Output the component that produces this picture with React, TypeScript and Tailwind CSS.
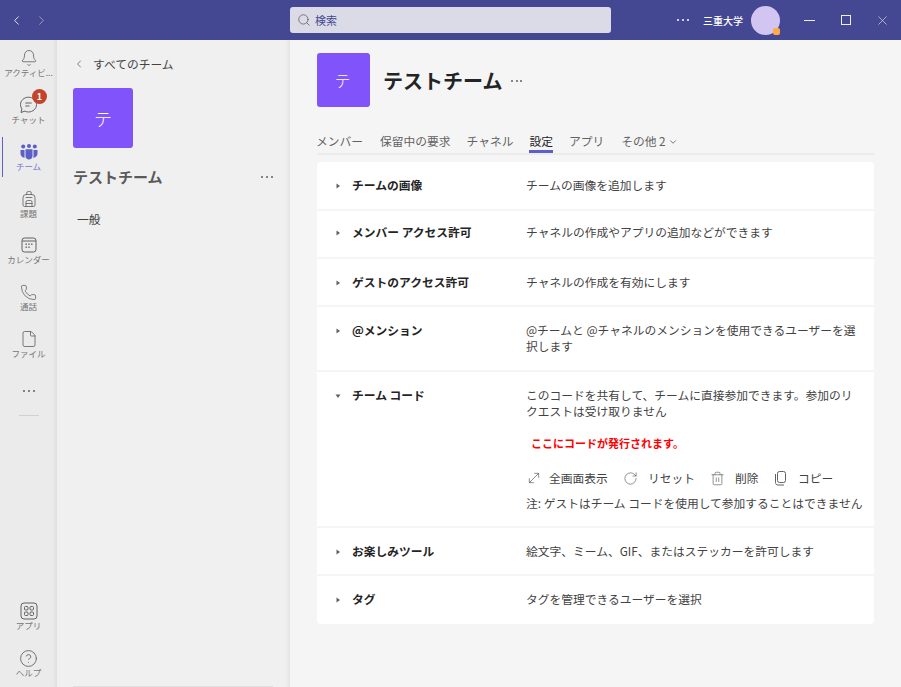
import { Backpack, Bell, ChevronDown, ChevronLeft, ChevronRight, CircleHelp, File, MoveDiagonal, Phone, RotateCw, Search, Trash2, X } from "lucide-react";
import type { ReactNode } from "react";

const font = "font-['Noto_Sans_CJK_JP','Noto_Sans',sans-serif]";

const Dots = ({ className }: { className: string }) => (
  <div className={`flex ${className}`}>
    <span className="h-[2px] w-[2px] rounded-full bg-current" />
    <span className="h-[2px] w-[2px] rounded-full bg-current" />
    <span className="h-[2px] w-[2px] rounded-full bg-current" />
  </div>
);

const ChatIcon = () => (
  <svg width="19" height="18" viewBox="0 0 19 18" fill="none" stroke="#616161" strokeWidth="1">
    <path d="M9.5 1.2c-4.4 0-8 3.3-8 7.4 0 1.6.5 3 1.4 4.2l-.9 3.7 3.9-1.4c1.1.6 2.3.9 3.6.9 4.4 0 8-3.3 8-7.4s-3.6-7.4-8-7.4z" />
    <path d="M6.3 7h6.4M6.3 10h4.2" />
  </svg>
);

const TeamsIcon = () => (
  <svg width="18" height="16" viewBox="0 0 18 16" fill="#5b5fc7">
    <circle cx="3.2" cy="2.6" r="2" />
    <circle cx="9" cy="2" r="2" />
    <circle cx="14.8" cy="2.6" r="2" />
    <path d="M0.5 6h4v6.2c0 .8.1 1.2.3 1.6C2.5 13.6.5 12 .5 9.5zM17.5 6h-4v6.2c0 .8-.1 1.2-.3 1.6 2.3-.2 4.3-1.8 4.3-4.3z" />
    <path d="M5.5 5.2h7V12c0 2-1.6 3.6-3.5 3.6S5.5 14 5.5 12z" />
  </svg>
);

const CalendarIcon = () => (
  <svg width="16" height="16" viewBox="0 0 16 16" fill="none" stroke="#616161">
    <rect x="1" y="1" width="14" height="14" rx="2.5" />
    <path d="M1 4h14" />
    <g fill="#616161" stroke="none">
      <rect x="4.5" y="6.5" width="1.4" height="1.4" />
      <rect x="7.3" y="6.5" width="1.4" height="1.4" />
      <rect x="10.1" y="6.5" width="1.4" height="1.4" />
      <rect x="4.5" y="9.5" width="1.4" height="1.4" />
      <rect x="7.3" y="9.5" width="1.4" height="1.4" />
    </g>
  </svg>
);

const AppsIcon = () => (
  <svg width="18" height="18" viewBox="0 0 18 18" fill="none" stroke="#616161">
    <rect x="1" y="1" width="16" height="16" rx="3" />
    <rect x="4.5" y="4.5" width="3.5" height="3.5" rx="1" />
    <rect x="10" y="4.5" width="3.5" height="3.5" rx="1" />
    <rect x="4.5" y="10" width="3.5" height="3.5" rx="1" />
    <rect x="10" y="10" width="3.5" height="3.5" rx="1" />
  </svg>
);

const CopyIcon = () => (
  <svg width="14" height="15" viewBox="0 0 14 15" fill="none" stroke="#616161" className="mr-[10px]">
    <rect x="3.5" y="0.5" width="8" height="11" rx="2" />
    <path d="M1.5 3v8.5c0 1.5 1 2.5 2.5 2.5h6" />
  </svg>
);

const RailItem = ({ icon, label, active, className }: { icon: ReactNode; label: string; active?: boolean; className?: string }) => (
  <div className={`relative flex w-full flex-col items-center justify-start pt-[9px] ${className ?? "h-[47px]"}`}>
    {active && <div className="absolute left-[2px] top-[3px] h-[40px] w-[1px] bg-[#5b5fc7]" />}
    <div className="flex h-[18px] items-center justify-center">{icon}</div>
    <div className={`w-full truncate text-center text-[8.5px] leading-[11px] ${active ? "text-[#7678d2]" : "text-[#757575]"}`}>{label}</div>
  </div>
);

const Tri = ({ open }: { open?: boolean }) => (
  <svg width="6" height="6" viewBox="0 0 6 6" fill="#616161" className={open ? "rotate-90" : ""}>
    <path d="M1.5 0.5 5 3 1.5 5.5z" />
  </svg>
);

const Row = ({ title, desc, h, open, children }: { title: string; desc: string; h: string; open?: boolean; children?: ReactNode }) => (
  <div className={`flex border-b-2 border-[#f5f5f5] last:border-b-0 ${h}`}>
    <div className="ml-[5px] flex h-[17px] w-[19px] items-center justify-end">
      <Tri open={open} />
    </div>
    <div className="ml-[11px] w-[174px] text-[11.75px] font-bold leading-[16px] text-[#242424]">{title}</div>
    <div className="w-[336px] text-[11.75px] leading-[16px] text-[#424242]">
      {desc}
      {children}
    </div>
  </div>
);

const Action = ({ icon, label, className }: { icon: ReactNode; label: string; className: string }) => (
  <div className={`flex items-center ${className}`}>
    {icon}
    <span className="text-[11.75px] text-[#424242]">{label}</span>
  </div>
);

export default function App() {
  return (
    <div className={`flex h-[687px] w-[901px] flex-col overflow-hidden bg-[#f5f5f5] ${font}`}>
      <header className="flex h-10 shrink-0 items-center bg-[#444791] text-white">
        <div className="flex w-[290px] items-center pl-[9px]">
          <ChevronLeft size={15} strokeWidth={1.5} className="text-[#eeeeee]" />
          <ChevronRight size={15} strokeWidth={1.2} className="ml-[10px] text-[#b5b6d0]" />
        </div>
        <div className="flex h-[26px] w-[321px] items-center rounded-[3px] bg-[#dbdbe7] pl-[7px]">
          <Search size={14} strokeWidth={1.4} className="text-[#616161]" />
          <span className="ml-[4px] text-[11px] text-[#444791]">検索</span>
        </div>
        <Dots className="ml-[66px] gap-[3px] text-white" />
        <span className="ml-[14px] text-[10px] font-medium">三重大学</span>
        <div className="relative ml-[8px] h-[29px] w-[29px] rounded-full bg-[#d3c5f2]">
          <div className="absolute bottom-0 right-0 h-[7px] w-[7px] rounded-[2px] bg-[#ffaa44]" />
        </div>
        <div className="ml-[24px] h-px w-[11px] bg-[#eeeeee]" />
        <div className="ml-[26px] h-[10px] w-[10px] border border-[#eeeeee]" />
        <X size={15} strokeWidth={1.1} className="ml-[24px] text-[#dddddd]" />
      </header>

      <div className="flex min-h-0 flex-1">
        <nav className="flex w-[57px] shrink-0 flex-col items-center bg-[#ebebeb] shadow-[inset_-5px_0_5px_-4px_rgba(0,0,0,0.08)]">
          <RailItem icon={<Bell size={18} strokeWidth={1.1} className="text-[#616161]" />} label="アクティビ..." />
          <div className="relative w-full">
            <RailItem icon={<ChatIcon />} label="チャット" />
            <div className="absolute left-[32px] top-[2px] flex h-[15px] w-[15px] items-center justify-center rounded-full bg-[#c4432b] text-[9px] font-bold text-white">1</div>
          </div>
          <RailItem active icon={<TeamsIcon />} label="チーム" />
          <RailItem className="h-[46px]" icon={<Backpack size={18} strokeWidth={1.1} className="text-[#616161]" />} label="課題" />
          <RailItem className="h-[47px]" icon={<CalendarIcon />} label="カレンダー" />
          <RailItem className="h-[47px]" icon={<Phone size={17} strokeWidth={1.1} className="text-[#616161]" />} label="通話" />
          <RailItem className="h-[46px]" icon={<File size={18} strokeWidth={1.1} className="text-[#616161]" />} label="ファイル" />
          <Dots className="mt-[23px] gap-[3px] text-[#616161]" />
          <div className="mt-[23px] h-px w-5 bg-[#d1d1d1]" />
          <div className="mt-auto w-full">
            <RailItem icon={<AppsIcon />} label="アプリ" />
            <RailItem icon={<CircleHelp size={19} strokeWidth={1.1} className="text-[#616161]" />} label="ヘルプ" />
          </div>
        </nav>

        <aside className="flex w-[233px] shrink-0 flex-col bg-[#f0f0f0] pl-4 shadow-[inset_-5px_0_5px_-4px_rgba(0,0,0,0.08)]">
          <div className="mt-[15px] flex h-[18px] items-center">
            <ChevronLeft size={12} strokeWidth={1.3} className="text-[#424242]" />
            <span className="ml-[8px] text-[11.75px] text-[#424242]">すべてのチーム</span>
          </div>
          <div className="mt-[15px] flex h-[60px] w-[60px] items-center justify-center rounded-[3px] bg-[#8153fb] text-[18px] font-light text-white">テ</div>
          <div className="mt-[19px] flex h-[20px] items-center justify-between pr-[17px]">
            <span className="text-[15px] font-bold text-[#5a5a5a]">テストチーム</span>
            <Dots className="gap-[3px] text-[#616161]" />
          </div>
          <div className="ml-[4px] mt-[23px] text-[11.75px] text-[#424242]">一般</div>
          <div className="mt-auto h-px w-[200px] bg-[#e0e0e0]" />
        </aside>

        <main className="flex min-w-0 flex-1 flex-col pl-[27px] pr-[27px] pt-[13px]">
          <div className="flex items-center">
            <div className="flex h-[54px] w-[53px] items-center justify-center rounded-[3px] bg-[#8153fb] pr-[2px] text-[16px] font-light text-white">テ</div>
            <span className="ml-[13px] mt-[2px] text-[20px] font-bold text-[#242424]">テストチーム</span>
            <Dots className="ml-[9px] mt-[2px] gap-[2.5px] text-[#616161]" />
          </div>
          <div className="mt-[25px] flex h-[23px] items-start gap-4 border-b-2 border-[#ebebeb] text-[11.75px] leading-[18px] text-[#616161]">
            <span className="-ml-px mr-px">メンバー</span>
            <span>保留中の要求</span>
            <span>チャネル</span>
            <span className="relative h-[21px] text-[#242424]">
              設定
              <span className="absolute bottom-0 left-0 h-[3px] w-full bg-[#5b5fc7]" />
            </span>
            <span>アプリ</span>
            <span className="ml-px flex items-start">
              その他 2
              <ChevronDown size={10} className="ml-[2px] mt-[5px]" />
            </span>
          </div>

          <div className="mt-[7px] w-[557px] rounded-[4px] bg-white">
            <Row title="チームの画像" desc="チームの画像を追加します" h="h-[49px] pt-[15px]" />
            <Row title="メンバー アクセス許可" desc="チャネルの作成やアプリの追加などができます" h="h-[48px] pt-[13px]" />
            <Row title="ゲストのアクセス許可" desc="チャネルの作成を有効にします" h="h-[48px] pt-[15px]" />
            <Row title="@メンション" desc="@チームと @チャネルのメンションを使用できるユーザーを選択します" h="h-[65px] pt-[15px]" />
            <Row title="チーム コード" desc="このコードを共有して、チームに直接参加できます。参加のリクエストは受け取りません" h="h-[156px] pt-[15px]" open>
              <div className="ml-[5px] mt-[16px] text-[11px] font-bold text-[#ff0000]">ここにコードが発行されます。</div>
              <div className="mt-[18px] flex h-[18px] items-center">
                <Action icon={<MoveDiagonal size={16} strokeWidth={1.1} className="mr-[7px] text-[#616161]" />} label="全画面表示" className="w-[97px]" />
                <Action icon={<RotateCw size={15} strokeWidth={1.1} className="mr-[10px] text-[#616161]" />} label="リセット" className="w-[87px]" />
                <Action icon={<Trash2 size={15} strokeWidth={1.1} className="mr-[10px] text-[#616161]" />} label="削除" className="w-[64px]" />
                <Action icon={<CopyIcon />} label="コピー" className="w-[70px]" />
              </div>
              <div className="mt-[8px] whitespace-nowrap">注: ゲストはチーム コードを使用して参加することはできません</div>
            </Row>
            <Row title="お楽しみツール" desc="絵文字、ミーム、GIF、またはステッカーを許可します" h="h-[48px] pt-[15px]" />
            <Row title="タグ" desc="タグを管理できるユーザーを選択" h="h-[48px] pt-[15px]" />
          </div>
        </main>
      </div>
    </div>
  );
}
